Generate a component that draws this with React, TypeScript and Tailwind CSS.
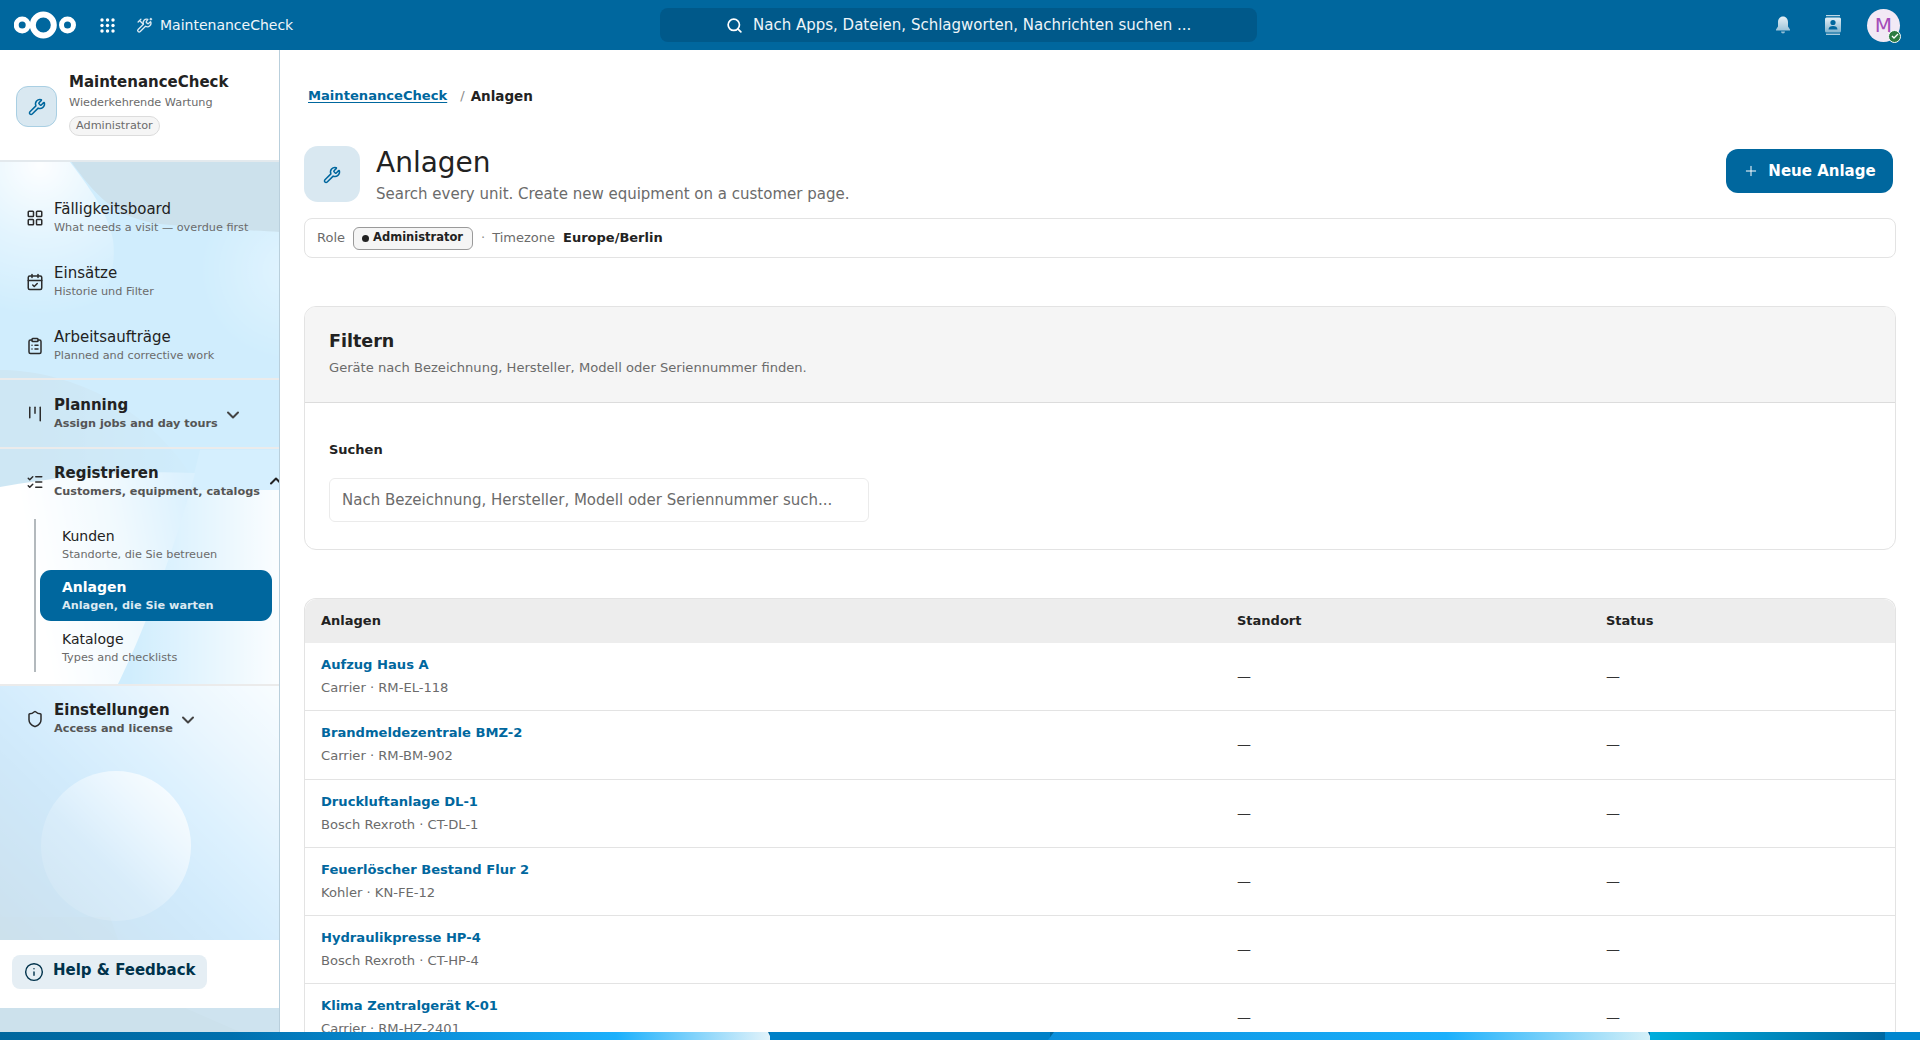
import React from "react";
import {
  LayoutGrid, CalendarCheck, ClipboardList, Kanban, ListChecks, Shield, ChevronDown, ChevronUp, Wrench, Search, Plus, Info,
} from "lucide-react";

function Backdrop() {
  return (
    <svg className="absolute inset-0" width="1920" height="1040" viewBox="0 0 1920 1040">
      <defs>
        <linearGradient id="stripA" x1="0" x2="770" y1="0" y2="0" gradientUnits="userSpaceOnUse">
          <stop offset="0" stopColor="#00679e" />
          <stop offset="0.3" stopColor="#0070ae" />
          <stop offset="0.55" stopColor="#0a8fd9" />
          <stop offset="0.8" stopColor="#1bb0fc" />
          <stop offset="1" stopColor="#e3f3fa" />
        </linearGradient>
        <linearGradient id="stripB" x1="1050" x2="1650" y1="0" y2="0" gradientUnits="userSpaceOnUse">
          <stop offset="0" stopColor="#0a8fdc" />
          <stop offset="0.66" stopColor="#1bb0fc" />
          <stop offset="1" stopColor="#d5f0f8" />
        </linearGradient>
        <linearGradient id="stripC" x1="1650" x2="1885" y1="0" y2="0" gradientUnits="userSpaceOnUse">
          <stop offset="0" stopColor="#00aedd" />
          <stop offset="1" stopColor="#0068a2" />
        </linearGradient>
        <radialGradient id="topWhite" cx="40" cy="165" r="150" gradientUnits="userSpaceOnUse">
          <stop offset="0" stopColor="#ffffff" stopOpacity="0.95" />
          <stop offset="0.5" stopColor="#ffffff" stopOpacity="0.4" />
          <stop offset="1" stopColor="#ffffff" stopOpacity="0" />
        </radialGradient>
        <radialGradient id="rightGlow" cx="290" cy="270" r="90" gradientUnits="userSpaceOnUse">
          <stop offset="0" stopColor="#ffffff" stopOpacity="0.35" />
          <stop offset="1" stopColor="#ffffff" stopOpacity="0" />
        </radialGradient>
        <linearGradient id="midDark" x1="40" x2="220" y1="420" y2="420" gradientUnits="userSpaceOnUse">
          <stop offset="0" stopColor="#00679e" stopOpacity="0.5" />
          <stop offset="1" stopColor="#00679e" stopOpacity="0" />
        </linearGradient>
        <linearGradient id="whiteShape" x1="30" x2="195" y1="560" y2="530" gradientUnits="userSpaceOnUse">
          <stop offset="0" stopColor="#ffffff" />
          <stop offset="0.55" stopColor="#b8e3fb" />
          <stop offset="1" stopColor="#4cb9f8" />
        </linearGradient>
        <linearGradient id="rightPart" x1="130" x2="280" y1="600" y2="600" gradientUnits="userSpaceOnUse">
          <stop offset="0" stopColor="#14a6f6" />
          <stop offset="1" stopColor="#eaf7fe" />
        </linearGradient>
        <linearGradient id="lower" x1="280" x2="20" y1="690" y2="960" gradientUnits="userSpaceOnUse">
          <stop offset="0" stopColor="#ddf3ff" />
          <stop offset="0.21" stopColor="#96d2fa" />
          <stop offset="0.375" stopColor="#55b9fa" />
          <stop offset="0.55" stopColor="#1f9cf0" />
          <stop offset="0.65" stopColor="#0f8ce1" />
          <stop offset="0.92" stopColor="#006eb4" />
          <stop offset="1" stopColor="#00679e" />
        </linearGradient>
        <linearGradient id="circle" x1="190" x2="50" y1="780" y2="920" gradientUnits="userSpaceOnUse">
          <stop offset="0" stopColor="#ffffff" stopOpacity="0.85" />
          <stop offset="0.6" stopColor="#ffffff" stopOpacity="0.2" />
          <stop offset="1" stopColor="#ffffff" stopOpacity="0.08" />
        </linearGradient>
      </defs>
      <rect x="0" y="0" width="1920" height="1040" fill="#00679e" />
      <rect x="0" y="162" width="280" height="330" fill="#14a6f6" />
      <path d="M0 162 L70 162 C95 195 108 215 113 240 C118 275 100 320 60 345 L0 345 Z" fill="url(#topWhite)" />
      <rect x="190" y="180" width="90" height="180" fill="url(#rightGlow)" />
      <path d="M70 160 C95 195 115 218 160 224 C210 229 250 230 280 232 L280 160 Z" fill="#00679e" />
      <path d="M0 370 C60 370 150 400 200 490 L0 490 Z" fill="url(#midDark)" />
      <rect x="0" y="487" width="280" height="203" fill="url(#rightPart)" />
      <path d="M200 450 L280 450 L280 490 L190 490 Z" fill="#2eb0f8" />
      <path d="M0 487 C60 476 130 470 195 473 C180 530 150 620 115 690 L0 690 Z" fill="url(#whiteShape)" />
      <rect x="0" y="686" width="280" height="322" fill="url(#lower)" />
      <path d="M0 917 L110 917 L118 940 L0 940 Z" fill="#00679e" fillOpacity="0.35" />
      <circle cx="116" cy="846" r="75" fill="url(#circle)" />
      <path d="M185 1008 L240 1032 L280 1032 L280 1008 Z" fill="#0a75ae" />
      <path d="M0 1032 L768 1032 L772 1040 L0 1040 Z" fill="url(#stripA)" />
      <rect x="770" y="1032" width="280" height="8" fill="#0081c8" />
      <path d="M1054 1032 L1648 1032 L1652 1040 L1048 1040 Z" fill="url(#stripB)" />
      <rect x="1650" y="1032" width="235" height="8" fill="url(#stripC)" />
      <rect x="1885" y="1032" width="35" height="8" fill="#0086cf" />
    </svg>
  );
}

function Logo() {
  return (
    <svg width="62" height="28" viewBox="0 0 62 28" className="shrink-0">
      <g fill="none" stroke="#fff">
        <circle cx="29.300" cy="14" r="10.500" strokeWidth="6" />
        <circle cx="8.200" cy="14" r="6" strokeWidth="5" />
        <circle cx="53.500" cy="14" r="6" strokeWidth="5" />
      </g>
    </svg>
  );
}

function AppsGrid() {
  const pts = [2, 7.5, 13];
  return (
    <svg width="15" height="15" viewBox="0 0 15 15" className="shrink-0">
      {pts.map((y) => pts.map((x) => <circle key={`${x}-${y}`} cx={x} cy={y} r="1.7" fill="#fff" />))}
    </svg>
  );
}

function AppIcon() {
  return (
    <svg width="17" height="17" viewBox="0 0 24 24" fill="none" stroke="#dbe9f2" strokeWidth="1.9" strokeLinecap="round" strokeLinejoin="round" className="shrink-0">
      <path d="M14.7 6.3a1 1 0 0 0 0 1.4l1.6 1.6a1 1 0 0 0 1.4 0l2.8-2.8a5 5 0 0 1-7 6.6L6 20.6a2.1 2.1 0 0 1-3-3l7.5-7.5a5 5 0 0 1 6.2-6.8z" />
      <path d="M5 5l5 5M3 7l4-4" />
      <path d="M21 2v2M20 3h2" />
    </svg>
  );
}

function Bell() {
  return (
    <svg width="20" height="20" viewBox="0 0 20 20">
      <defs>
        <linearGradient id="fade" x1="0" x2="0" y1="0" y2="1">
          <stop offset="0" stopColor="#ffffff" stopOpacity="0.9" />
          <stop offset="1" stopColor="#ffffff" stopOpacity="0.55" />
        </linearGradient>
      </defs>
      <path d="M10 1.5c-3.2 0-5 2.6-5 5.6v4.4L3 14.5v1h14v-1l-2-3V7.100c0-3-1.800-5.600-5-5.600z M8 16.500h4a2 2 0 0 1-4 0z" fill="url(#fade)" />
    </svg>
  );
}

function Contacts() {
  return (
    <svg width="20" height="22" viewBox="0 0 20 22">
      <defs>
        <linearGradient id="fade2" x1="0" x2="0" y1="0" y2="1">
          <stop offset="0" stopColor="#ffffff" stopOpacity="0.9" />
          <stop offset="1" stopColor="#ffffff" stopOpacity="0.5" />
        </linearGradient>
      </defs>
      <rect x="3" y="1" width="14" height="1.300" fill="url(#fade2)" />
      <rect x="3" y="19.700" width="14" height="1.300" fill="url(#fade2)" />
      <rect x="2" y="3.500" width="16" height="15" rx="1.500" fill="url(#fade2)" />
      <circle cx="10" cy="8.500" r="2.600" fill="#00679e" />
      <path d="M5.500 15.500c0-2.500 2-3.500 4.500-3.500s4.500 1 4.500 3.500z" fill="#00679e" />
    </svg>
  );
}

function NavText({ title, sub, bold, active, small }: { title: string; sub: string; bold?: boolean; active?: boolean; small?: boolean }) {
  return (
    <div className="flex flex-col whitespace-nowrap">
      <span className={`${small ? "text-[14px]" : "text-[15px]"} leading-[19px] ${bold || active ? "font-bold" : ""} ${active ? "text-white" : "text-[#222222]"}`}>{title}</span>
      <span className={`text-[11.25px] leading-[17px] ${active ? "font-bold text-[#dbe9f2]" : bold ? "font-bold text-[#555555]" : "text-[#6b6b6b]"}`}>{sub}</span>
    </div>
  );
}

function NavItem({ icon: I, title, sub }: { icon: typeof Wrench; title: string; sub: string }) {
  return (
    <div className="flex h-[64px] items-center gap-[10px] pl-[26px]">
      <I size={18} strokeWidth={2} color="#2b2b2b" className="shrink-0" />
      <NavText title={title} sub={sub} />
    </div>
  );
}

function Section({ icon: I, title, sub, open, tall }: { icon: typeof Wrench; title: string; sub: string; open?: boolean; tall?: boolean }) {
  return (
    <div className={`flex ${tall ? "h-[67px]" : "h-[66px]"} items-center gap-[10px] pl-[26px]`}>
      <I size={18} strokeWidth={2} color="#2b2b2b" className="shrink-0" />
      <NavText title={title} sub={sub} bold />
      {open ? (
        <ChevronUp size={20} strokeWidth={2.4} color="#222222" className="shrink-0 -ml-[4px] -mt-[2px]" />
      ) : (
        <ChevronDown size={20} strokeWidth={2.4} color="#444444" className="shrink-0 -ml-[5px] mt-[2px]" />
      )}
    </div>
  );
}

function Divider() {
  return <div className="h-[2px] bg-[#ebebeb]" />;
}

const rows = [
  ["Aufzug Haus A", "Carrier · RM-EL-118"],
  ["Brandmeldezentrale BMZ-2", "Carrier · RM-BM-902"],
  ["Druckluftanlage DL-1", "Bosch Rexroth · CT-DL-1"],
  ["Feuerlöscher Bestand Flur 2", "Kohler · KN-FE-12"],
  ["Hydraulikpresse HP-4", "Bosch Rexroth · CT-HP-4"],
  ["Klima Zentralgerät K-01", "Carrier · RM-HZ-2401"],
];

export default function App() {
  return (
    <div className="relative flex h-[1040px] w-[1920px] flex-col overflow-hidden font-['DejaVu_Sans',sans-serif] text-[#222222]">
      <Backdrop />
      <header className="relative flex h-[50px] shrink-0 items-center bg-[#00679e] text-white">
        <div className="flex w-[660px] items-center pl-[14px]">
          <Logo />
          <div className="ml-[24px]"><AppsGrid /></div>
          <div className="ml-[21px]"><AppIcon /></div>
          <span className="ml-[7px] text-[14px] text-[#f0f6fa]">MaintenanceCheck</span>
        </div>
        <div className="flex h-[34px] w-[597px] items-center rounded-[8px] bg-[#00598a] pl-[66px]">
          <Search size={17} strokeWidth={2.400} color="#fff" />
          <span className="ml-[10px] text-[15px] text-[#eef5f9] whitespace-nowrap">Nach Apps, Dateien, Schlagworten, Nachrichten suchen ...</span>
        </div>
        <div className="ml-auto flex items-center pr-[20px]">
          <Bell />
          <div className="ml-[30px]"><Contacts /></div>
          <div className="relative ml-[24px] flex h-[33px] w-[33px] items-center justify-center rounded-full bg-[#f2e9f5] text-[20px] text-[#a54cb8]">
            M
            <div className="absolute -right-[1px] -bottom-[1px] flex h-[13px] w-[13px] items-center justify-center rounded-full border border-white bg-[#2d7b41]">
              <svg width="8" height="8" viewBox="0 0 8 8" fill="none" stroke="#fff" strokeWidth="1.300"><path d="M1 4l2 2 4-4" /></svg>
            </div>
          </div>
        </div>
      </header>

      <div className="relative flex min-h-0 flex-1 pb-[8px]">
        <aside className="flex w-[280px] shrink-0 flex-col overflow-hidden border-r border-[#b9cfdc] bg-white/80">
          <div className="flex h-[112px] shrink-0 items-start gap-[12px] border-b-2 border-[#e3e9ed] bg-white pl-[16px] pt-[21px]">
            <div className="mt-[15px] flex h-[41px] w-[41px] items-center justify-center rounded-[12px] border border-[#a9cfe3] bg-[#d9e8f1]">
              <Wrench size={18} strokeWidth={2} color="#00679e" />
            </div>
            <div className="flex flex-col items-start">
              <span className="text-[15px] font-bold leading-[22px] text-[#222222]">MaintenanceCheck</span>
              <span className="mt-[1px] text-[11.25px] leading-[17px] text-[#6b6b6b]">Wiederkehrende Wartung</span>
              <span className="mt-[5px] rounded-full border border-[#dcdcdc] bg-[#f5f5f5] px-[6px] text-[11.25px] leading-[18px] text-[#6b6b6b]">Administrator</span>
            </div>
          </div>
          <nav className="flex flex-1 flex-col pt-[24px]">
            <NavItem icon={LayoutGrid} title="Fälligkeitsboard" sub="What needs a visit — overdue first" />
            <NavItem icon={CalendarCheck} title="Einsätze" sub="Historie und Filter" />
            <NavItem icon={ClipboardList} title="Arbeitsaufträge" sub="Planned and corrective work" />
            <Divider />
            <Section icon={Kanban} title="Planning" sub="Assign jobs and day tours" tall />
            <Divider />
            <Section icon={ListChecks} title="Registrieren" sub="Customers, equipment, catalogs" open />
            <div className="ml-[34px] mt-[4px] flex w-[238px] flex-col border-l-2 border-[#b3b9bd] pl-[4px]">
              <div className="flex h-[51px] items-center pl-[22px]"><NavText small title="Kunden" sub="Standorte, die Sie betreuen" /></div>
              <div className="flex h-[51px] items-center rounded-[11px] bg-[#00679e] pl-[22px]"><NavText small title="Anlagen" sub="Anlagen, die Sie warten" active /></div>
              <div className="flex h-[51px] items-center pl-[22px] pt-[2px]"><NavText small title="Kataloge" sub="Types and checklists" /></div>
            </div>
            <div className="mt-[12px]"><Divider /></div>
            <Section icon={Shield} title="Einstellungen" sub="Access and license" />
          </nav>
          <div className="flex h-[68px] shrink-0 items-start bg-white pl-[12px] pt-[15px]">
            <div className="flex h-[34px] w-[195px] items-center gap-[9px] rounded-[8px] bg-[#e5eef4] pl-[12px] text-[#00324b]">
              <Info size={20} strokeWidth={1.700} color="#00324b" />
              <span className="pb-[3px] text-[15px] font-bold">Help &amp; Feedback</span>
            </div>
          </div>
          <div className="h-[24px] shrink-0" />
        </aside>

        <main className="flex min-w-0 flex-1 flex-col overflow-hidden bg-white px-[24px] pt-[36px]">
          <div className="flex h-[20px] items-center pl-[4px] text-[13.100px] font-bold">
            <span className="text-[#00679e] underline underline-offset-2">MaintenanceCheck</span>
            <span className="ml-[13px] font-normal text-[#8a8a8a]">/</span>
            <span className="ml-[6px] text-[13.500px] text-[#222222]">Anlagen</span>
          </div>

          <div className="mt-[40px] flex items-start">
            <div className="flex h-[56px] w-[56px] items-center justify-center rounded-[14px] bg-[#d9e8f1]">
              <Wrench size={18} strokeWidth={2} color="#00679e" className="mt-[1px]" />
            </div>
            <div className="ml-[16px] flex flex-col">
              <span className="text-[28px] leading-[34px] text-[#222222]">Anlagen</span>
              <span className="mt-[3px] text-[15px] leading-[22px] text-[#6b6b6b]">Search every unit. Create new equipment on a customer page.</span>
            </div>
            <button className="ml-auto mr-[3px] mt-[3px] flex h-[44px] w-[167px] items-center justify-center gap-[9px] rounded-[12px] bg-[#00679e] text-[15px] font-bold text-white">
              <Plus size={16} strokeWidth={1.500} />
              Neue Anlage
            </button>
          </div>

          <div className="mt-[13px] flex h-[40px] shrink-0 items-center rounded-[8px] border border-[#e3e3e3] pl-[12px] text-[13px]">
            <span className="text-[#6b6b6b]">Role</span>
            <span className="ml-[8px] flex h-[23px] items-center gap-[4px] rounded-[6px] border border-[#9a9a9a] bg-[#f5f5f5] pl-[8px] pr-[9px] text-[11.500px] font-bold text-[#222222]">
              <span className="h-[7px] w-[7px] rounded-full bg-[#222222]" />
              Administrator
            </span>
            <span className="ml-[8px] text-[#8a8a8a]">·</span>
            <span className="ml-[7px] text-[#6b6b6b]">Timezone</span>
            <span className="ml-[8px] font-bold text-[#222222]">Europe/Berlin</span>
          </div>

          <section className="mt-[48px] flex h-[244px] shrink-0 flex-col overflow-hidden rounded-[12px] border border-[#e3e3e3]">
            <div className="flex h-[96px] shrink-0 flex-col border-b border-[#dcdcdc] bg-[#f5f5f5] pl-[24px] pt-[23px]">
              <span className="text-[17.500px] font-bold leading-[22px] text-[#222222]">Filtern</span>
              <span className="mt-[7px] text-[13.100px] leading-[18px] text-[#6b6b6b]">Geräte nach Bezeichnung, Hersteller, Modell oder Seriennummer finden.</span>
            </div>
            <div className="flex flex-col pl-[24px] pt-[38px]">
              <span className="text-[13px] font-bold leading-[18px] text-[#222222]">Suchen</span>
              <div className="mt-[19px] flex h-[44px] w-[540px] items-center rounded-[6px] border border-[#ebebeb] pl-[12px] text-[15px] text-[#6b6b6b] whitespace-nowrap">
                Nach Bezeichnung, Hersteller, Modell oder Seriennummer such...
              </div>
            </div>
          </section>

          <section className="mt-[48px] flex shrink-0 flex-col rounded-t-[12px] border-x border-t border-[#e3e3e3]">
            <div className="grid h-[44px] grid-cols-[916px_369px_1fr] items-center rounded-t-[12px] bg-[#ededed] text-[13px] font-bold text-[#222222]">
              <span className="pl-[16px]">Anlagen</span>
              <span className="pl-[16px]">Standort</span>
              <span className="pl-[16px]">Status</span>
            </div>
            {rows.map(([name, sub]) => (
              <div key={name} className="grid h-[68.250px] grid-cols-[916px_369px_1fr] items-center border-b border-[#e3e3e3]">
                <div className="flex flex-col pl-[16px]">
                  <span className="text-[13.100px] font-bold leading-[20px] text-[#00679e]">{name}</span>
                  <span className="mt-[3px] text-[13.100px] leading-[20px] text-[#6b6b6b]">{sub}</span>
                </div>
                <span className="pl-[16px] text-[14px] text-[#333333]">—</span>
                <span className="pl-[16px] text-[14px] text-[#333333]">—</span>
              </div>
            ))}
          </section>
        </main>
      </div>
    </div>
  );
}
